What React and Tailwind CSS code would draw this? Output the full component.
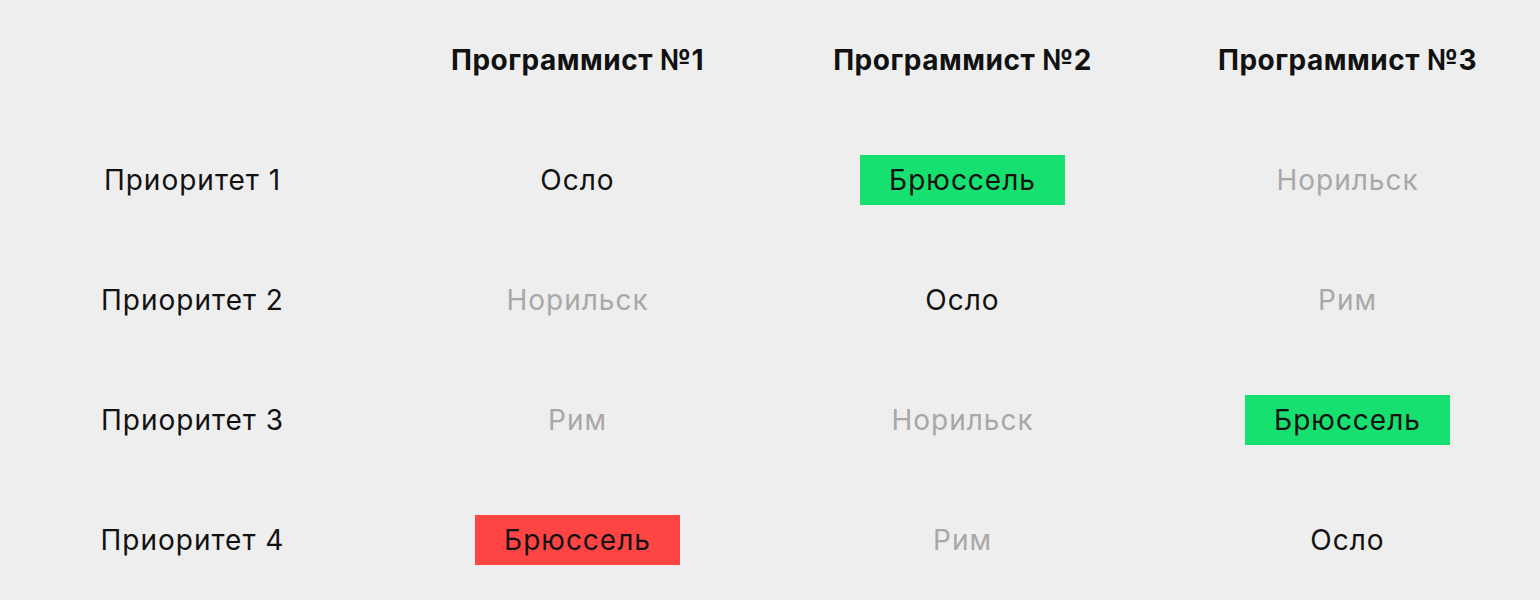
export default function App() {
  const gray = "text-[#a8a8a8]";
  const black = "text-[#111111]";
  const rows = [
    ["Приоритет 1", [["Осло", "n"], ["Брюссель", "g"], ["Норильск", "m"]]],
    ["Приоритет 2", [["Норильск", "m"], ["Осло", "n"], ["Рим", "m"]]],
    ["Приоритет 3", [["Рим", "m"], ["Норильск", "m"], ["Брюссель", "g"]]],
    ["Приоритет 4", [["Брюссель", "r"], ["Рим", "m"], ["Осло", "n"]]],
  ];
  const cell = (text, kind, i) => {
    if (kind === "g")
      return (
        <div key={i} className="flex items-center justify-center">
          <div className="w-[205px] h-[50px] bg-[#16e070] flex items-center justify-center text-[#111111]">{text}</div>
        </div>
      );
    if (kind === "r")
      return (
        <div key={i} className="flex items-center justify-center">
          <div className="w-[205px] h-[50px] bg-[#ff4444] flex items-center justify-center text-[#111111]">{text}</div>
        </div>
      );
    return (
      <div key={i} className={`flex items-center justify-center ${kind === "m" ? gray : black}`}>{text}</div>
    );
  };
  return (
    <div className="w-[1540px] h-[600px] bg-[#eeeeee] font-['Inter',sans-serif] text-[28px] tracking-[1px] grid grid-cols-4 grid-rows-5">
      <div />
      {["Программист №1", "Программист №2", "Программист №3"].map((h) => (
        <div key={h} className="flex items-center justify-center font-bold tracking-[0.5px] text-[#111111]">{h}</div>
      ))}
      {rows.map(([label, cells]) => [
        <div key={label} className="flex items-center justify-center text-[#111111]">{label}</div>,
        ...cells.map((c, i) => cell(c[0], c[1], label + i)),
      ])}
    </div>
  );
}
